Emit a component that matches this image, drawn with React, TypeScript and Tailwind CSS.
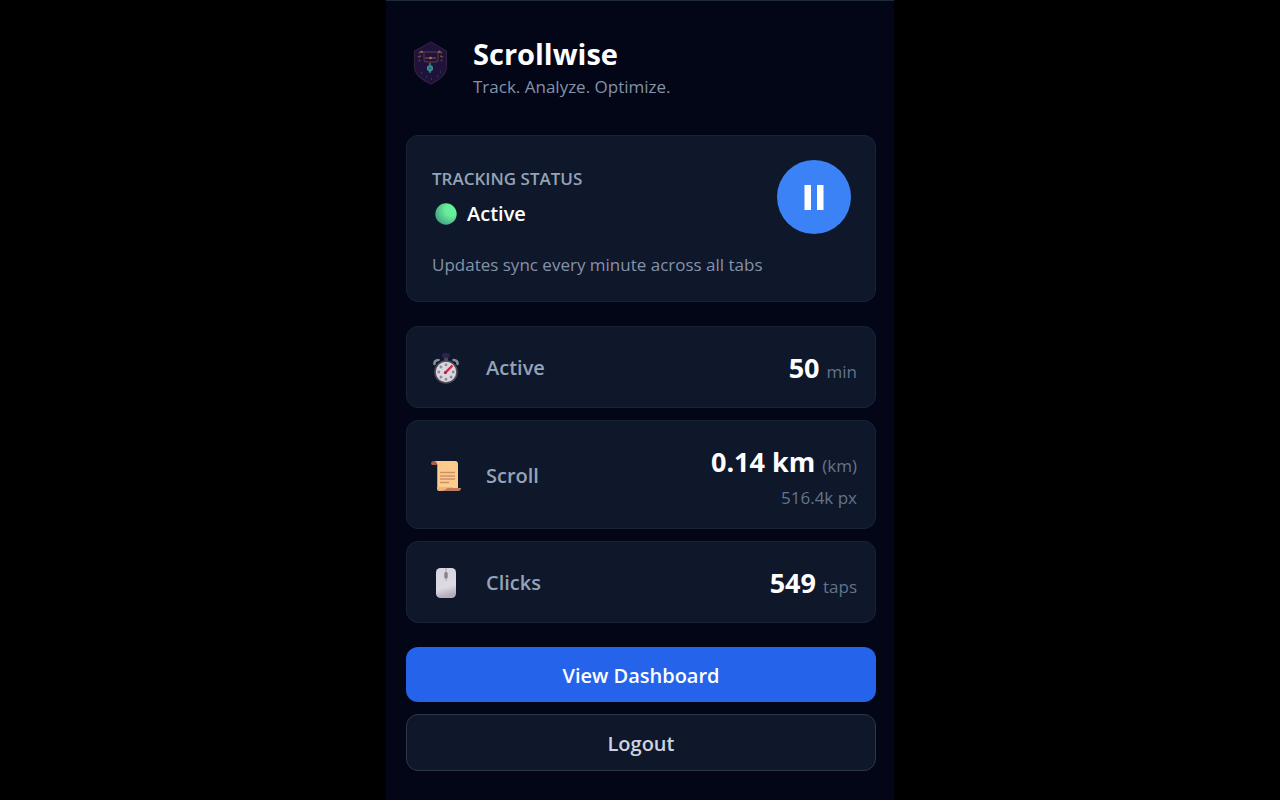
import { useState } from 'react';

function Logo() {
  return (
    <svg width="36" height="44" viewBox="0 0 36 44" fill="none" className="mt-2">
      <path d="M18 1 L33.5 10 V26 C33.5 34 26 39 18 43 C10 39 1.5 34 1.5 26 V10 Z" fill="#20123a" stroke="#30203c" strokeWidth="1.2" />
      <path d="M9 11 H26 M11 11 V18 Q11 21 14 21 H22 Q25 21 25 18 V11" stroke="#4a3342" strokeWidth="1.3" />
      <path d="M6 12 L9 10 M5 16 L8 15 M6 20 L7 19 M29 12 L26 10 M30 16 L27 15 M29 20 L28 19" stroke="#6d4a45" strokeWidth="1.6" />
      <path d="M12 17 H23" stroke="#6b4a48" strokeWidth="1.4" />
      <circle cx="9" cy="11" r="1" fill="#a06e4a" />
      <circle cx="26" cy="11" r="1" fill="#a06e4a" />
      <circle cx="17.5" cy="17" r="1.2" fill="#b98350" />
      <path d="M17 22 V25 M17 29 V32" stroke="#2f6f7c" strokeWidth="1.8" />
      <circle cx="17" cy="27.3" r="2.4" fill="#3a6a76" stroke="#3a9490" strokeWidth="1.4" />
      <path d="M8 32 h1 M13 36 h1 M24 35 h1 M27 31 h1 M18 38 h1" stroke="#204a60" strokeWidth="1.4" />
    </svg>
  );
}

function StatusDot() {
  return (
    <svg width="22" height="22" viewBox="0 0 22 22">
      <defs>
        <radialGradient id="dot" cx="0.75" cy="0.3" r="0.8">
          <stop offset="0.35" stopColor="#68ee9b" />
          <stop offset="1" stopColor="#45a580" />
        </radialGradient>
      </defs>
      <circle cx="11" cy="11" r="10.7" fill="url(#dot)" />
    </svg>
  );
}

function StopwatchIcon() {
  return (
    <svg width="30" height="32" viewBox="0 0 30 32" fill="none">
      <path d="M13 4 H17 V9 H13 Z" fill="#4d4660" />
      <path d="M11 2 Q15 0 19 2 V5 Q15 7 11 5 Z" fill="#2c2550" />
      <path d="M3.5 12 Q3 8.5 7.5 8 M26.5 12 Q27 8.5 22.5 8" stroke="#8d8b95" strokeWidth="2.6" strokeLinecap="round" />
      <circle cx="15" cy="20" r="11" fill="#d9d6df" stroke="#4c4958" strokeWidth="1.6" />
      <g stroke="#8c8894" strokeWidth="2.4">
        <path d="M15 11.5 V14 M15 26 V28.5 M6.5 20 H9 M21 20 H23.5 M9 14 L10.8 15.8 M19.2 24.2 L21 26 M9 26 L10.8 24.2" />
      </g>
      <path d="M13.5 21.5 L21.5 13.5" stroke="#cf2846" strokeWidth="2.4" />
      <circle cx="14.5" cy="20.5" r="1.5" fill="#9a2d4b" />
    </svg>
  );
}

function ScrollIcon() {
  return (
    <svg width="30" height="32" viewBox="0 0 30 32" fill="none">
      <path d="M3 1 H24 Q27 1 27 4 V29 H6 V4 Z" fill="#fbcc8c" />
      <path d="M0 4 Q0 1 3 1 Q6 1 6 5 H1 Z" fill="#a4604f" />
      <path d="M6.5 4 V28" stroke="#d9935f" strokeWidth="1" />
      <path d="M6 27 H22 V31 H8 Q6 31 6 29 Z" fill="#eeb57c" />
      <path d="M16 28 H30 Q30 31 27 31 H8 Q15 31 16 28 Z" fill="#c07c5e" />
      <path d="M9 12.5 H24 M9 16 H24 M9 19 H24 M9 22.5 H18" stroke="#cf9068" strokeWidth="1.5" />
    </svg>
  );
}

function MouseIcon() {
  return (
    <svg width="30" height="32" viewBox="0 0 30 32" fill="none">
      <defs>
        <linearGradient id="mouse" x1="0" y1="0" x2="0.2" y2="1">
          <stop offset="0" stopColor="#d9d5df" />
          <stop offset="0.7" stopColor="#dedae4" />
          <stop offset="1" stopColor="#b6aebd" />
        </linearGradient>
      </defs>
      <rect x="5" y="1" width="20" height="30" rx="4.5" fill="url(#mouse)" />
      <path d="M15 1 V14" stroke="#a9a4b0" strokeWidth="1" />
      <rect x="13.3" y="5" width="3.4" height="6.5" rx="1.5" fill="#85828c" />
    </svg>
  );
}

function StatRow({ icon, label, value, unit, sub }: any) {
  return (
    <div className="flex items-center rounded-xl border border-[#1a2437] bg-[#0f172a] pt-[21px] pr-[18px] pb-[19px] pl-6">
      <span className="mr-[25px] flex w-[30px] shrink-0 justify-center">{icon}</span>
      <span className="text-xl font-semibold text-[#94a3b8]">{label}</span>
      <div className="ml-auto text-right">
        <p className="text-[27px] leading-10 font-bold text-white">
          {value} <span className="text-[17px] leading-none font-normal text-[#64748b]">{unit}</span>
        </p>
        {sub && <p className="mt-1 text-[17px] leading-[23px] text-[#64748b]">{sub}</p>}
      </div>
    </div>
  );
}

export default function App() {
  const [paused, setPaused] = useState(false);

  return (
    <div className="min-h-screen bg-black font-['Open_Sans','Noto_Sans',sans-serif]">
      <main className="mx-auto min-h-screen w-full max-w-[508px] border-t border-[#1e293b] bg-[#020617] pt-8 pr-[18px] pb-7 pl-5">
        <header className="mb-9 flex items-start gap-6 pl-[7px]">
          <Logo />
          <div>
            <h1 className="text-[29px] leading-[42px] font-bold text-white">Scrollwise</h1>
            <p className="text-[17px] leading-6 text-[#8492aa]">Track. Analyze. Optimize.</p>
          </div>
        </header>

        <section className="mb-6 rounded-xl border border-[#1a2437] bg-[#0f172a] py-6 pr-6 pl-[25px]">
          <div className="flex items-center justify-between">
            <div className="pt-0.5">
              <h2 className="text-[17px] leading-[26px] font-semibold text-[#94a3b8]">TRACKING STATUS</h2>
              <p className="mt-1.5 flex items-center gap-2.5 pl-[3px] text-xl leading-8 font-semibold text-white">
                <StatusDot />
                {paused ? 'Paused' : 'Active'}
              </p>
            </div>
            <button
              onClick={() => setPaused(!paused)}
              aria-label={paused ? 'Resume tracking' : 'Pause tracking'}
              className="flex size-[74px] items-center justify-center rounded-full bg-[#3b82f6]"
            >
              <svg width="20" height="26" viewBox="0 0 20 26" fill="#fff">
                {paused ? <path d="M2 1 L19 13 L2 25 Z" /> : <path d="M0.5 1 H7 V26 H0.5 Z M13 1 H19.5 V26 H13 Z" />}
              </svg>
            </button>
          </div>
          <p className="mt-[18px] text-[17px] leading-[25px] text-[#8492aa]">Updates sync every minute across all tabs</p>
        </section>

        <section className="mb-6 flex flex-col gap-3">
          <StatRow icon={<StopwatchIcon />} label="Active" value="50" unit="min" />
          <StatRow icon={<ScrollIcon />} label="Scroll" value="0.14 km" unit="(km)" sub="516.4k px" />
          <StatRow icon={<MouseIcon />} label="Clicks" value="549" unit="taps" />
        </section>

        <div className="flex flex-col gap-3">
          <button className="h-[55px] rounded-xl bg-[#2563eb] pt-0.5 text-xl font-semibold text-white">View Dashboard</button>
          <button className="h-[57px] rounded-xl border border-[#2c3748] bg-[#0f172a] pt-0.5 text-xl font-semibold text-[#cbd5e1]">
            Logout
          </button>
        </div>
      </main>
    </div>
  );
}
